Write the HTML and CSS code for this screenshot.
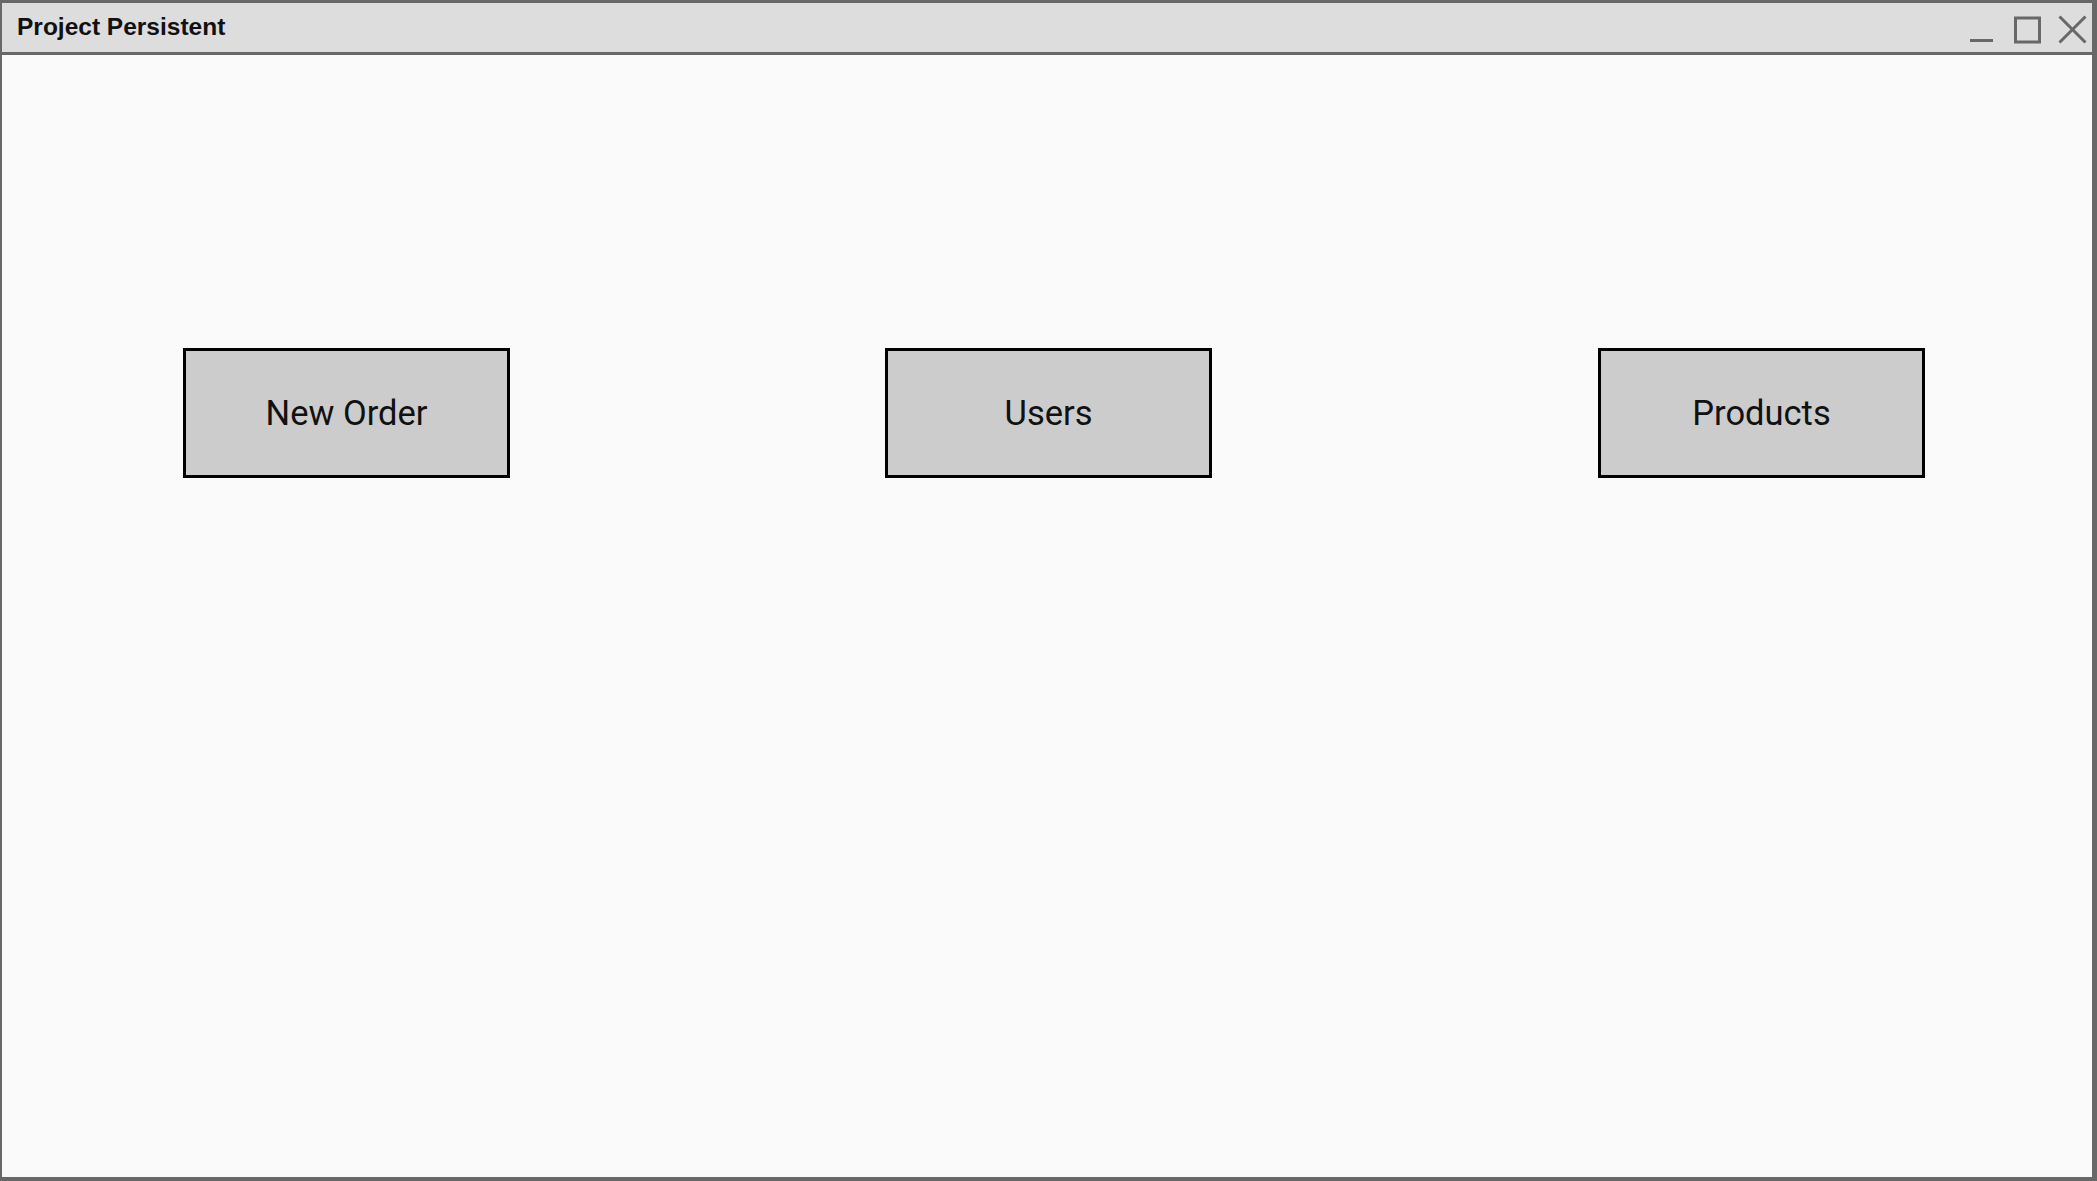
FILE: index.html
```html
<!DOCTYPE html>
<html lang="en">
<head>
<meta charset="utf-8">
<title>Project Persistent</title>
<link rel="stylesheet" href="styles.css">
</head>
<body>
<div class="window">
  <header class="titlebar">
    <span class="title">Project Persistent</span>
    <svg class="controls" width="125" height="49" viewBox="0 0 125 49" aria-hidden="true">
      <line x1="3" y1="37.5" x2="26" y2="37.5" stroke="#686868" stroke-width="3"/>
      <rect x="48.5" y="15" width="24" height="24" fill="none" stroke="#686868" stroke-width="3"/>
      <line x1="92.5" y1="13.5" x2="118.5" y2="39.5" stroke="#686868" stroke-width="3"/>
      <line x1="118.5" y1="13.5" x2="92.5" y2="39.5" stroke="#686868" stroke-width="3"/>
    </svg>
  </header>
  <main class="content">
    <div class="btn-row">
      <button class="btn btn-first">New Order</button>
      <button class="btn btn-second">Users</button>
      <button class="btn btn-third">Products</button>
    </div>
  </main>
</div>
</body>
</html>
```

FILE: styles.css
```css
html, body {
  margin: 0;
  padding: 0;
  width: 2097px;
  height: 1181px;
  overflow: hidden;
  background: #686868;
}

.window {
  box-sizing: border-box;
  width: 2097px;
  height: 1181px;
  border-style: solid;
  border-color: #686868;
  border-width: 3px 5px 4px 2px;
  display: flex;
  flex-direction: column;
  background: #fafafa;
}

.titlebar {
  box-sizing: border-box;
  height: 52px;
  flex: 0 0 52px;
  background: #dddddd;
  border-bottom: 3px solid #686868;
  display: flex;
  align-items: center;
  padding-left: 15px;
}

.title {
  font-family: "Liberation Sans", Arial, sans-serif;
  font-weight: bold;
  font-size: 24.5px;
  color: #111111;
  line-height: 1;
  margin-top: -1px;
}

.controls {
  margin-left: auto;
  display: block;
  align-self: flex-start;
}

.content {
  flex: 1;
  background: #fafafa;
}

.btn-row {
  display: flex;
  padding-top: 293px;
}

.btn {
  box-sizing: border-box;
  width: 327px;
  height: 130px;
  background: #cccccc;
  border: 3px solid #000000;
  font-family: Roboto, "Liberation Sans", sans-serif;
  font-size: 34.5px;
  color: #111111;
  padding: 0;
  display: flex;
  align-items: center;
  justify-content: center;
}

.btn-first { margin-left: 181px; }
.btn-second { margin-left: 375px; }
.btn-third { margin-left: 386px; }
```
